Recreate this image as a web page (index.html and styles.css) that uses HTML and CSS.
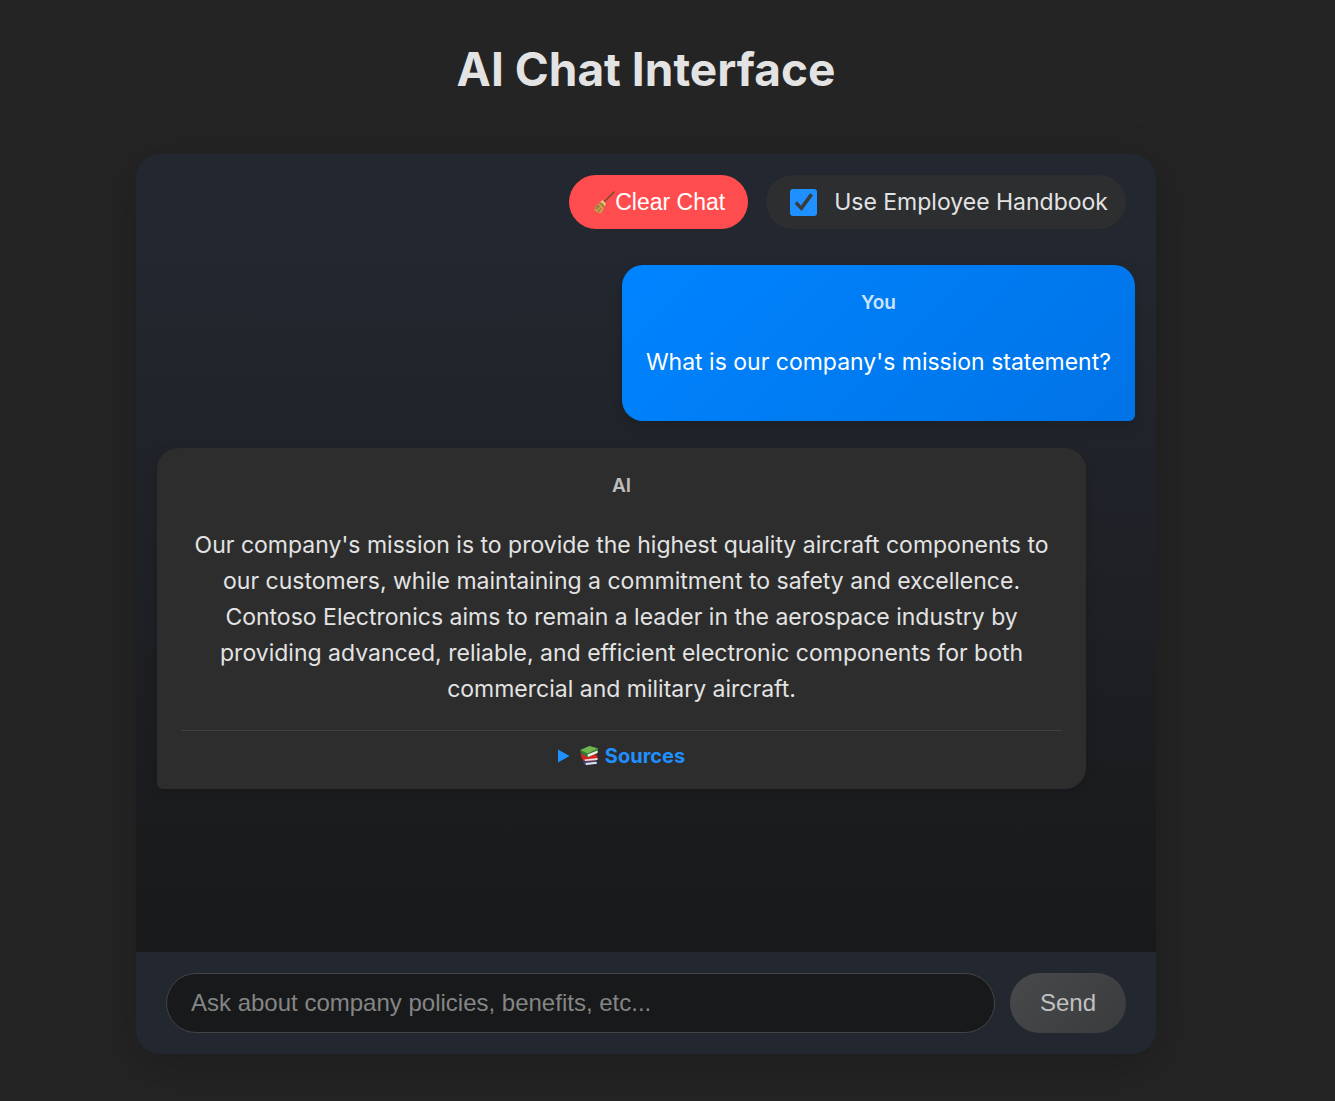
FILE: index.html
```html
<!DOCTYPE html>
<html lang="en">
<head>
<meta charset="utf-8">
<meta name="viewport" content="width=device-width, initial-scale=1">
<title>AI Chat Interface</title>
<link rel="stylesheet" href="styles.css">
</head>
<body>
<main class="page">
  <h1 class="title">AI Chat Interface</h1>
  <section class="chat">
    <header class="toolbar">
      <button class="clear" type="button">
        <svg class="broom" viewBox="0 0 24 24" aria-hidden="true">
          <path d="M23 1L12.500 11.500" stroke="#7a4a2c" stroke-width="1.600" stroke-linecap="round"/>
          <path d="M8 11.500q3.500 0 5.500 4l-1 2q-1 3.500-3.500 6-4.500-1-7-4 .5-1 1.500-1-1-1-.5-2 3-2 5-5z" fill="#c99d50"/>
          <path d="M7.500 12.500q4 1 5 4.500M4 19l4-3M6.500 21.500l3-3.500M3.500 17l3.500-2" fill="none" stroke="#80602f" stroke-width="1"/>
          <path d="M8.500 11.500l2.500-2 3.500 3.500-1 3q-1.500-3.500-5-4.500z" fill="#e6c678"/>
        </svg>Clear Chat
      </button>
      <label class="toggle"><input class="check" type="checkbox" checked>Use Employee Handbook</label>
    </header>
    <div class="messages">
      <article class="message user">
        <div class="sender">You</div>
        <p class="text">What is our company's mission statement?</p>
      </article>
      <article class="message ai">
        <div class="sender">AI</div>
        <p class="text">Our company's mission is to provide the highest quality aircraft components to our customers, while maintaining a commitment to safety and excellence. Contoso Electronics aims to remain a leader in the aerospace industry by providing advanced, reliable, and efficient electronic components for both commercial and military aircraft.</p>
        <details class="sources">
          <summary class="summary">
            <svg class="marker" viewBox="0 0 12 14" aria-hidden="true"><path d="M0 .5v13L11.500 7z" fill="#1e90ff"/></svg>
            <svg class="books" viewBox="0 0 20 20" aria-hidden="true">
              <path d="M4 14l12-.5 2 4.500-11.500 1.500q-2.500-2-2.500-5.500z" fill="#34437c"/>
              <path d="M6.500 17l11-1.200.5 2-11 1.200z" fill="#e3e3e3"/>
              <path d="M1.500 8l13-1 4 3v4l-12 1.500q-3.500-1.500-4-4z" fill="#d42520"/>
              <path d="M5.500 13.500l13-1.500v2l-12.500 1z" fill="#e9e2df"/>
              <path d="M1 4L10.500 0 19 2.500v4L9 11.500 2 7.500z" fill="#357638"/>
              <path d="M1.500 4L10.500 0 19 2.500 8.500 7.500z" fill="#70b44e"/>
              <path d="M8.500 8.500L18.500 4.500v2.500L9 11z" fill="#f1f0e8"/>
            </svg>
            <span>Sources</span>
          </summary>
          <p>Employee Handbook</p>
        </details>
      </article>
    </div>
    <form class="composer">
      <input class="prompt" type="text" aria-label="Message" placeholder="Ask about company policies, benefits, etc...">
      <button class="send" type="submit" disabled>Send</button>
    </form>
  </section>
</main>
</body>
</html>
```
FILE: styles.css
```css
* { box-sizing: border-box; }

body {
  margin: 0;
  background: #242424;
  color: #e3e3e3;
  font-family: Inter, sans-serif;
  font-size: 23px;
  line-height: 36px;
}

.page {
  display: flex;
  flex-direction: column;
  align-items: center;
  min-height: 100vh;
  padding: 42px 64px 47px 21px;
}

.title {
  margin: 0 0 58px;
  font-size: 46px;
  line-height: 54px;
  font-weight: 700;
}

.chat {
  display: flex;
  flex: 1;
  flex-direction: column;
  width: 100%;
  max-width: 1020px;
  border-radius: 24px;
  background: #23272f;
  box-shadow: 0 12px 48px rgba(0, 0, 0, 0.2);
  overflow: hidden;
}

.toolbar {
  display: flex;
  justify-content: flex-end;
  gap: 18px;
  padding: 21px 30px;
}

.clear {
  display: flex;
  align-items: center;
  height: 54px;
  padding: 0 23px;
  border: 0;
  border-radius: 27px;
  background: #ff4d4f;
  color: #fff;
  font: 23px "Liberation Sans", sans-serif;
}

.broom {
  width: 23px;
  height: 23px;
  fill: none;
}

.toggle {
  display: flex;
  align-items: center;
  gap: 17px;
  height: 54px;
  padding: 0 18px 0 24px;
  border-radius: 27px;
  background: #2d2e30;
}

.check {
  appearance: none;
  width: 27px;
  height: 27px;
  margin: 0;
  border: 1px solid #767676;
  border-radius: 3px;
}

.check:checked {
  border: 0;
  background: #1e90ff url("data:image/svg+xml,%3Csvg xmlns='http://www.w3.org/2000/svg' viewBox='0 0 27 27'%3E%3Cpath d='M4.700 14.700L7 12.300l4 4.400L20 4.300l3 2L11.700 22z' fill='%233b3b3b'/%3E%3C/svg%3E");
}

.messages {
  display: flex;
  flex: 1;
  flex-direction: column;
  gap: 27px;
  padding: 15px 21px;
  background: linear-gradient(#23272f, #18191a);
}

.message {
  max-width: 95%;
  padding: 17px 24px;
  border-radius: 21px;
  text-align: center;
  box-shadow: 0 3px 12px rgba(0, 0, 0, 0.15);
}

.user {
  align-self: flex-end;
  border-bottom-right-radius: 6px;
  background: linear-gradient(135deg, #0084ff, #0073e6);
  color: #fff;
}

.ai {
  align-self: flex-start;
  border-bottom-left-radius: 6px;
  background: #2d2d2d;
}

.sender {
  font-size: 19px;
  line-height: 42px;
  font-weight: 600;
  opacity: 0.8;
}

.text { margin: 20px 0 24px; }

.ai .text { margin-bottom: 23px; }

.sources {
  padding-top: 9px;
  border-top: 1px solid #404040;
}

.summary {
  display: flex;
  justify-content: center;
  align-items: center;
  gap: 6px;
  color: #1e90ff;
  font-size: 20px;
  line-height: 32px;
  font-weight: 700;
  list-style: none;
}

.marker {
  width: 12px;
  height: 14px;
  margin-right: 3px;
}

.books {
  width: 20px;
  height: 20px;
}

.composer {
  display: flex;
  gap: 15px;
  padding: 21px 30px;
}

.prompt {
  flex: 1;
  min-width: 0;
  height: 60px;
  padding: 0 24px;
  border: 1px solid #444;
  border-radius: 30px;
  background: #18191a;
  color: #e3e3e3;
  font: 24px "Liberation Sans", sans-serif;
}

.prompt::placeholder { color: #858585; }

.send {
  height: 60px;
  padding: 0 30px;
  border: 0;
  border-radius: 30px;
  background: linear-gradient(135deg, #48494b, #3a3b3c);
  color: #c0c1c2;
  font: 24px "Liberation Sans", sans-serif;
}
```
